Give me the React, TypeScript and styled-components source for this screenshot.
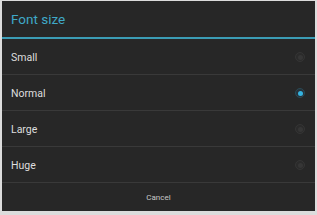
import styled, { createGlobalStyle } from "styled-components";

const GlobalStyle = createGlobalStyle`
  html, body {
    margin: 0;
    padding: 0;
    background: #e6e6e6;
  }
  body {
    font-family: Roboto, "Noto Sans", sans-serif;
  }
`;

const Frame = styled.div`
  width: 317px;
  height: 215px;
  box-sizing: border-box;
  padding: 1px 2px 4px 2px;
  background: #dcdcdc;
`;

const Dialog = styled.div`
  height: 100%;
  background: #272727;
  display: flex;
  flex-direction: column;
`;

const Title = styled.div`
  height: 36px;
  display: flex;
  align-items: center;
  padding-left: 9px;
  color: #3fa9c8;
  font-size: 13.5px;
  border-bottom: 2px solid #3b9cb5;
`;

const Row = styled.div`
  height: 34px;
  display: flex;
  align-items: center;
  justify-content: space-between;
  padding: 1px 10px 0 9px;
  border-bottom: 1px solid #393939;
  color: #dedede;
  font-size: 10.5px;
`;

const Radio = styled.span<{ $checked?: boolean }>`
  width: 8px;
  height: 8px;
  border-radius: 50%;
  display: flex;
  align-items: center;
  justify-content: center;
  border: 1px solid ${(p) => (p.$checked ? "#2a4a55" : "#353535")};
  background: ${(p) => (p.$checked ? "#27323a" : "#2b2b2b")};

  &::after {
    content: "";
    width: 5px;
    height: 5px;
    border-radius: 50%;
    background: ${(p) => (p.$checked ? "#35b3e0" : "#363636")};
  }
`;

const Footer = styled.div`
  flex: 1;
  display: flex;
  align-items: center;
  justify-content: center;
  color: #c8c8c8;
  font-size: 8px;
`;

const sizes = ["Small", "Normal", "Large", "Huge"];

export default function App() {
  return (
    <>
      <GlobalStyle />
      <Frame>
        <Dialog>
          <Title>Font size</Title>
          {sizes.map((s) => (
            <Row key={s}>
              {s}
              <Radio $checked={s === "Normal"} />
            </Row>
          ))}
          <Footer>Cancel</Footer>
        </Dialog>
      </Frame>
    </>
  );
}
